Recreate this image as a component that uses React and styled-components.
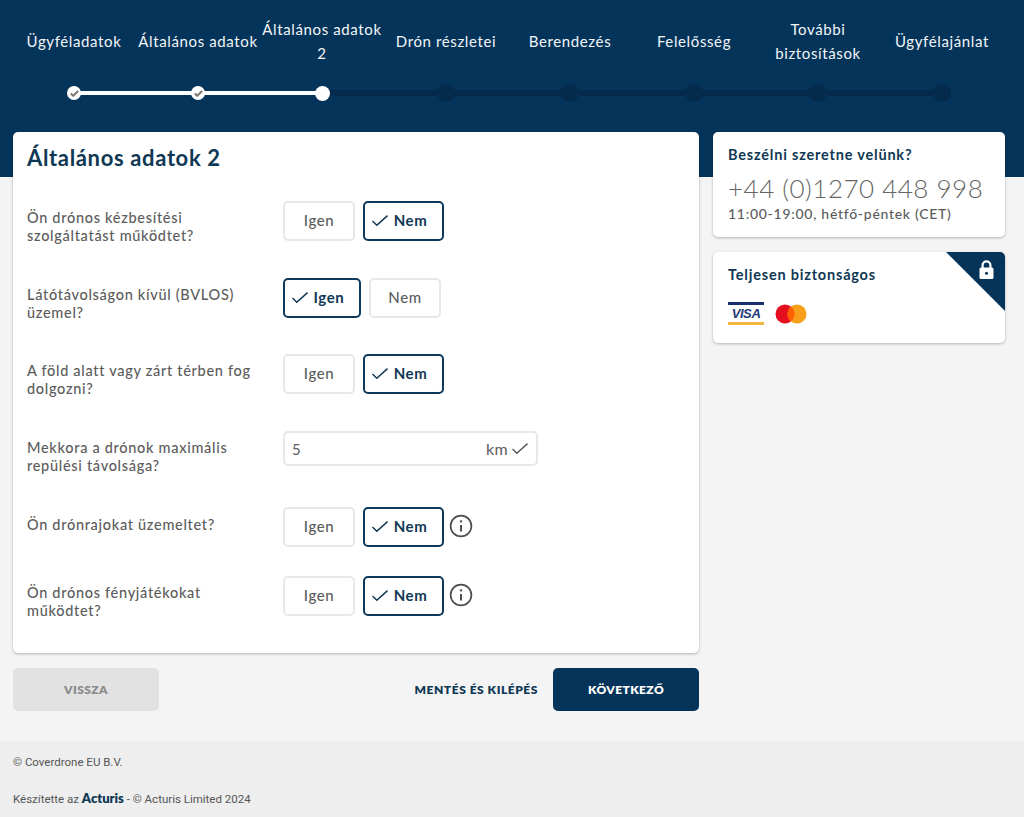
import React from "react";
import styled, { createGlobalStyle } from "styled-components";

const NAVY = "#05345a";
const INK = "#0f3854";
const GREY = "#5c5c5c";
const FONT = `"Lato", "Open Sans", "Liberation Sans", sans-serif`;

const Global = createGlobalStyle`
  html, body { margin: 0; padding: 0; background: #f4f4f4; }
  body { font-family: ${FONT}; }
  * { box-sizing: border-box; }
`;

const Page = styled.div`
  width: 1024px;
  height: 817px;
  display: flex;
  flex-direction: column;
  overflow: hidden;
`;
const Header = styled.header`
  height: 177px;
  flex: none;
  background: ${NAVY};
  padding: 17px 20px 0 12px;
`;
const Steps = styled.div`
  display: grid;
  grid-template-columns: repeat(8, 124px);
`;
const StepLabel = styled.div`
  height: 48px;
  padding: 0 1px;
  display: flex;
  align-items: center;
  justify-content: center;
  text-align: center;
  color: #f2f5f7;
  font-size: 15px;
  line-height: 24px;
  letter-spacing: 0.62px;
`;
const Rail = styled.div`
  display: grid;
  grid-template-columns: repeat(8, 124px);
  margin-top: 19px;
`;
const RailCell = styled.div`
  position: relative;
  height: 18px;
  display: flex;
  align-items: center;
  justify-content: center;
  &::after {
    content: "";
    display: ${(p) => (p.$last ? "none" : "block")};
    position: absolute;
    left: 50%;
    width: 124px;
    top: ${(p) => (p.$state === "done" ? "7px" : "6px")};
    height: ${(p) => (p.$state === "done" ? "4px" : "6px")};
    background: ${(p) => (p.$state === "done" ? "#ffffff" : "#042b4b")};
  }
`;
const Dot = styled.span`
  position: relative;
  z-index: 1;
  border-radius: 50%;
  display: flex;
  align-items: center;
  justify-content: center;
  color: #7f7872;
  width: ${(p) => (p.$state === "done" ? 14 : p.$state === "current" ? 15 : 18)}px;
  height: ${(p) => (p.$state === "done" ? 14 : p.$state === "current" ? 15 : 18)}px;
  background: ${(p) => (p.$state === "todo" ? "#042b4b" : "#ffffff")};
`;
const Content = styled.main`
  flex: 1;
  margin-top: -45px;
  padding: 0 19px 0 13px;
  display: grid;
  grid-template-columns: 686px 292px;
  column-gap: 14px;
  align-items: start;
`;
const Card = styled.section`
  position: relative;
  background: #fff;
  border-radius: 5px;
  box-shadow: 0 1px 3px rgba(0, 0, 0, 0.28);
  overflow: hidden;
`;
const FormCard = styled(Card)`
  height: 521px;
  padding: 13px 14px 0;
`;
const Title = styled.h1`
  margin: 0 0 31px;
  height: 25px;
  font-size: 22px;
  line-height: 25px;
  font-weight: 700;
  letter-spacing: 0.65px;
  color: ${INK};
`;
const Row = styled.div`
  display: grid;
  grid-template-columns: 256px 1fr;
  height: ${(p) => p.$height}px;
`;
const Question = styled.div`
  font-size: 14.5px;
  line-height: 18px;
  letter-spacing: 0.7px;
  font-weight: 500;
  color: ${GREY};
  padding-top: ${(p) => p.$top ?? 8}px;
  width: 236px;
`;
const Controls = styled.div`
  display: flex;
  align-items: flex-start;
  gap: 8px;
`;
const Toggle = styled.button`
  height: 40px;
  width: ${(p) => p.$w}px;
  padding: 0 ${(p) => (p.$on ? 8 : 0)}px 2px 0;
  display: flex;
  align-items: center;
  justify-content: center;
  gap: 6px;
  border-radius: 5px;
  background: #fff;
  font-family: ${FONT};
  font-size: 15px;
  letter-spacing: 0.6px;
  font-weight: ${(p) => (p.$on ? 700 : 500)};
  color: ${(p) => (p.$on ? INK : GREY)};
  border: 2px solid ${(p) => (p.$on ? "#0d3a5c" : "#e8e8e8")};
`;
const InfoWrap = styled.span`
  display: flex;
  align-items: center;
  height: 38px;
  color: #4d4d4d;
  margin-left: -3px;
`;
const Field = styled.div`
  width: 255px;
  height: 35px;
  border: 2px solid #e8e8e8;
  border-radius: 5px;
  display: flex;
  align-items: center;
  padding: 0 8px 0 7px;
  font-size: 15px;
  color: ${GREY};
`;
const FieldValue = styled.span`
  flex: 1;
`;
const Unit = styled.span`
  margin-right: 4px;
  font-size: 16px;
  letter-spacing: 0.3px;
`;
const Actions = styled.div`
  margin-top: 15px;
  display: flex;
  align-items: center;
  justify-content: space-between;
`;
const RightActions = styled.div`
  display: flex;
  align-items: center;
  gap: 15px;
`;
const ActionButton = styled.button`
  width: 146px;
  height: 43px;
  border: 0;
  border-radius: 5px;
  font-family: ${FONT};
  font-weight: 800;
  font-size: 12px;
  letter-spacing: 0.4px;
  background: ${(p) => (p.$primary ? NAVY : "#e2e2e2")};
  color: ${(p) => (p.$primary ? "#fff" : "#8a8a8a")};
`;
const SaveLink = styled.a`
  font-size: 12px;
  font-weight: 800;
  letter-spacing: 0.55px;
  color: ${INK};
`;
const Side = styled.aside`
  display: flex;
  flex-direction: column;
  gap: 15px;
`;
const ContactCard = styled(Card)`
  height: 105px;
  padding: 14px 15px 0;
`;
const SecureCard = styled(Card)`
  height: 91px;
  padding: 14px 15px 0;
`;
const SideTitle = styled.div`
  font-size: 14.5px;
  line-height: 18px;
  font-weight: 700;
  letter-spacing: 0.8px;
  color: ${INK};
`;
const Phone = styled.div`
  font-size: 26px;
  line-height: 30px;
  margin-top: 9px;
  font-weight: 300;
  letter-spacing: 0.5px;
  white-space: nowrap;
  color: #666;
`;
const Hours = styled.div`
  font-size: 14px;
  line-height: 14px;
  margin-top: 4px;
  letter-spacing: 0.72px;
  font-weight: 500;
  color: ${GREY};
`;
const Corner = styled.div`
  position: absolute;
  top: 0;
  right: 0;
  width: 59px;
  height: 59px;
  background: ${NAVY};
  clip-path: polygon(0 0, 100% 0, 100% 100%);
`;
const CornerIcon = styled.svg`
  position: absolute;
  top: 8px;
  right: 11px;
`;
const Logos = styled.div`
  display: flex;
  align-items: center;
  gap: 11px;
  margin-top: 18px;
`;
const Visa = styled.div`
  width: 36px;
  height: 23px;
  border-top: 3px solid #1a2f6d;
  border-bottom: 3px solid #f0b73e;
  display: flex;
  align-items: center;
  justify-content: center;
  color: #1f3a78;
  font-family: "Liberation Sans", sans-serif;
  font-weight: 700;
  font-style: italic;
  font-size: 13px;
  letter-spacing: -0.4px;
`;
const Footer = styled.footer`
  flex: none;
  height: 76px;
  margin-top: 30px;
  background: #eeeeee;
  padding: 15px 13px 0;
  font-family: "Roboto", sans-serif;
  font-size: 11.5px;
  color: #555;
`;
const FootLine = styled.div`
  line-height: 13px;
  margin-bottom: 23px;
`;
const Brand = styled.b`
  font-family: ${FONT};
  color: ${INK};
  font-size: 13px;
  font-weight: 800;
`;

const Tick = styled.svg`
  flex: none;
  fill: none;
  stroke: currentColor;
  stroke-width: 1.5;
`;
const CheckMark = () => (
  <Tick width="16" height="11" viewBox="0 0 16 11">
    <path d="M0.5 6L4.8 10.2L15.5 0.6" />
  </Tick>
);
const SmallTick = styled.svg`
  fill: none;
  stroke: currentColor;
  stroke-width: 2;
`;
const InfoIcon = () => (
  <svg width="24" height="24" viewBox="0 0 24 24" fill="none" stroke="currentColor" strokeWidth="1.7">
    <circle cx="12" cy="12" r="10.4" />
    <path d="M12 11v6.4" strokeWidth="2" />
    <path d="M12 6.4v2" strokeWidth="2.2" />
  </svg>
);

const steps = [
  "Ügyféladatok", "Általános adatok", "Általános adatok 2", "Drón részletei",
  "Berendezés", "Felelősség", "További biztosítások", "Ügyfélajánlat",
];
const stateOf = (i) => (i < 2 ? "done" : i === 2 ? "current" : "todo");

const Choice = ({ value, info }) => (
  <Controls>
    <Toggle $on={value === "Igen"} $w={value === "Igen" ? 78 : 72}>
      {value === "Igen" && <CheckMark />}Igen
    </Toggle>
    <Toggle $on={value === "Nem"} $w={value === "Nem" ? 81 : 72}>
      {value === "Nem" && <CheckMark />}Nem
    </Toggle>
    {info && (
      <InfoWrap>
        <InfoIcon />
      </InfoWrap>
    )}
  </Controls>
);

export default function App() {
  return (
    <Page>
      <Global />
      <Header>
        <Steps>
          {steps.map((s) => (
            <StepLabel key={s}>{s}</StepLabel>
          ))}
        </Steps>
        <Rail>
          {steps.map((s, i) => (
            <RailCell key={s} $state={i < 2 ? "done" : "todo"} $last={i === 7}>
              <Dot $state={stateOf(i)}>
                {i < 2 && (
                  <SmallTick width="9" height="7" viewBox="0 0 9 7">
                    <path d="M0.8 3.6L3.2 5.8L8.2 1" />
                  </SmallTick>
                )}
              </Dot>
            </RailCell>
          ))}
        </Rail>
      </Header>
      <Content>
        <div>
          <FormCard>
            <Title>Általános adatok 2</Title>
            <Row $height={77}>
              <Question>Ön drónos kézbesítési szolgáltatást működtet?</Question>
              <Choice value="Nem" />
            </Row>
            <Row $height={76}>
              <Question>Látótávolságon kívül (BVLOS) üzemel?</Question>
              <Choice value="Igen" />
            </Row>
            <Row $height={77}>
              <Question>A föld alatt vagy zárt térben fog dolgozni?</Question>
              <Choice value="Nem" />
            </Row>
            <Row $height={76}>
              <Question>Mekkora a drónok maximális repülési távolsága?</Question>
              <Field>
                <FieldValue>5</FieldValue>
                <Unit>km</Unit>
                <CheckMark />
              </Field>
            </Row>
            <Row $height={69}>
              <Question $top={9}>Ön drónrajokat üzemeltet?</Question>
              <Choice value="Nem" info />
            </Row>
            <Row $height={60}>
              <Question>Ön drónos fényjátékokat működtet?</Question>
              <Choice value="Nem" info />
            </Row>
          </FormCard>
          <Actions>
            <ActionButton>VISSZA</ActionButton>
            <RightActions>
              <SaveLink>MENTÉS ÉS KILÉPÉS</SaveLink>
              <ActionButton $primary>KÖVETKEZŐ</ActionButton>
            </RightActions>
          </Actions>
        </div>
        <Side>
          <ContactCard>
            <SideTitle>Beszélni szeretne velünk?</SideTitle>
            <Phone>+44 (0)1270 448 998</Phone>
            <Hours>11:00-19:00, hétfő-péntek (CET)</Hours>
          </ContactCard>
          <SecureCard>
            <Corner>
              <CornerIcon width="15" height="19" viewBox="0 0 15 19">
                <path d="M3.6 8.5V5.2a3.9 3.9 0 0 1 7.8 0v3.3" fill="none" stroke="#fff" strokeWidth="2.2" />
                <rect x="0.5" y="7.5" width="14" height="11.5" rx="1.6" fill="#fff" />
                <circle cx="7.5" cy="13.2" r="1.5" fill="#05345a" />
              </CornerIcon>
            </Corner>
            <SideTitle>Teljesen biztonságos</SideTitle>
            <Logos>
              <Visa>VISA</Visa>
              <svg width="32" height="20" viewBox="0 0 32 20">
                <circle cx="10" cy="10" r="9.5" fill="#e60f1f" />
                <circle cx="22" cy="10" r="9.5" fill="#f79e1b" />
                <path d="M16 2.6a9.5 9.5 0 0 1 0 14.8a9.5 9.5 0 0 1 0-14.8z" fill="#ff5f00" />
              </svg>
            </Logos>
          </SecureCard>
        </Side>
      </Content>
      <Footer>
        <FootLine>© Coverdrone EU B.V.</FootLine>
        <FootLine>
          Készítette az <Brand>Acturis</Brand> - © Acturis Limited 2024
        </FootLine>
      </Footer>
    </Page>
  );
}
